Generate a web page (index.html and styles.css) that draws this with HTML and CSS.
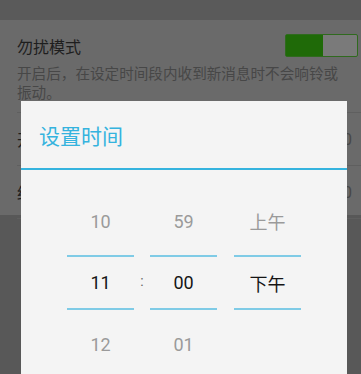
FILE: index.html
```html
<!DOCTYPE html>
<html lang="zh">
<head>
    <meta charset="UTF-8">
    <title>勿扰模式</title>
    <link rel="stylesheet" href="styles.css">
</head>
<body>
<div class="statusbar"></div>

<div class="settings">
    <div class="row-switch">
        <span class="row-title">勿扰模式</span>
        <span class="toggle"><span class="toggle-on"></span></span>
    </div>
    <p class="row-desc">开启后，在设定时间段内收到新消息时不会响铃或振动。</p>

    <div class="row">
        <span class="row-title">开始时间</span>
        <span class="row-value">23:00</span>
    </div>
    <div class="row">
        <span class="row-title">结束时间</span>
        <span class="row-value">08:00</span>
    </div>
</div>

<div class="dialog">
    <h2 class="dialog-title">设置时间</h2>
    <div class="picker">
        <div class="column">
            <div class="item">10</div>
            <div class="item current">11</div>
            <div class="item">12</div>
        </div>
        <div class="colon">:</div>
        <div class="column">
            <div class="item">59</div>
            <div class="item current">00</div>
            <div class="item">01</div>
        </div>
        <div class="spacer"></div>
        <div class="column">
            <div class="item">上午</div>
            <div class="item current">下午</div>
            <div class="item"></div>
        </div>
    </div>
</div>
</body>
</html>
```

FILE: styles.css
```css
:root {
    --status: #5a5a5a;
    --dim: #6a6a6a;
    --below: #585858;
    --text-dim: #1e1e1e;
    --desc-dim: #474747;
    --dialog-bg: #f4f4f4;
    --accent: #35b3de;
    --picker-line: #7fcbe6;
}

* {
    box-sizing: border-box;
}

body {
    margin: 0;
    width: 361px;
    height: 374px;
    overflow: hidden;
    position: relative;
    background-color: var(--below);
    font-family: Roboto, "Noto Sans CJK SC", sans-serif;
}

.statusbar {
    height: 20px;
    background-color: var(--status);
}

.settings {
    background-color: var(--dim);
    padding: 0 0 0 17px;
    height: 195px;
}

.row-switch {
    display: flex;
    justify-content: space-between;
    align-items: center;
    height: 51px;
    padding-right: 3px;
}

.row-title {
    font-family: "Noto Sans CJK SC", sans-serif;
    font-size: 16px;
    color: var(--text-dim);
}

.toggle {
    display: block;
    width: 73px;
    height: 23px;
    border: 1px solid #2f6a1e;
    border-radius: 2px;
    background-color: #7a7a7a;
}

.toggle-on {
    display: block;
    width: 37px;
    height: 100%;
    background-color: #1f6a08;
}

.row-desc {
    margin: -8px 0 0;
    padding-right: 18px;
    font-family: "Noto Sans CJK SC", sans-serif;
    font-size: 14.6px;
    line-height: 19px;
    color: var(--desc-dim);
    height: 50px;
    border-bottom: 1px solid #5f5f5f;
}

.row {
    display: flex;
    justify-content: space-between;
    align-items: center;
    height: 53px;
    padding-right: 9px;
    border-bottom: 1px solid #5f5f5f;
}

.row-value {
    font-size: 16px;
    color: var(--desc-dim);
}

.dialog {
    position: absolute;
    left: 21px;
    top: 101px;
    width: 326px;
    height: 290px;
    background-color: var(--dialog-bg);
}

.dialog-title {
    margin: 0;
    height: 69px;
    padding: 20px 0 0 18px;
    font-family: "Noto Sans CJK SC", sans-serif;
    font-size: 21px;
    font-weight: 400;
    line-height: 28px;
    color: var(--accent);
    border-bottom: 2px solid var(--accent);
}

.picker {
    display: flex;
    padding-left: 46px;
    padding-top: 17px;
}

.column {
    width: 67px;
}

.item {
    height: 68px;
    display: flex;
    align-items: center;
    justify-content: center;
    font-size: 18px;
    color: #9a9a9a;
}

.item.current {
    height: 55px;
    color: #151515;
    border-top: 2px solid var(--picker-line);
    border-bottom: 2px solid var(--picker-line);
}

.colon {
    width: 16px;
    padding-top: 86px;
    text-align: center;
    font-size: 14px;
    color: #666;
}

.spacer {
    width: 17px;
}
```
